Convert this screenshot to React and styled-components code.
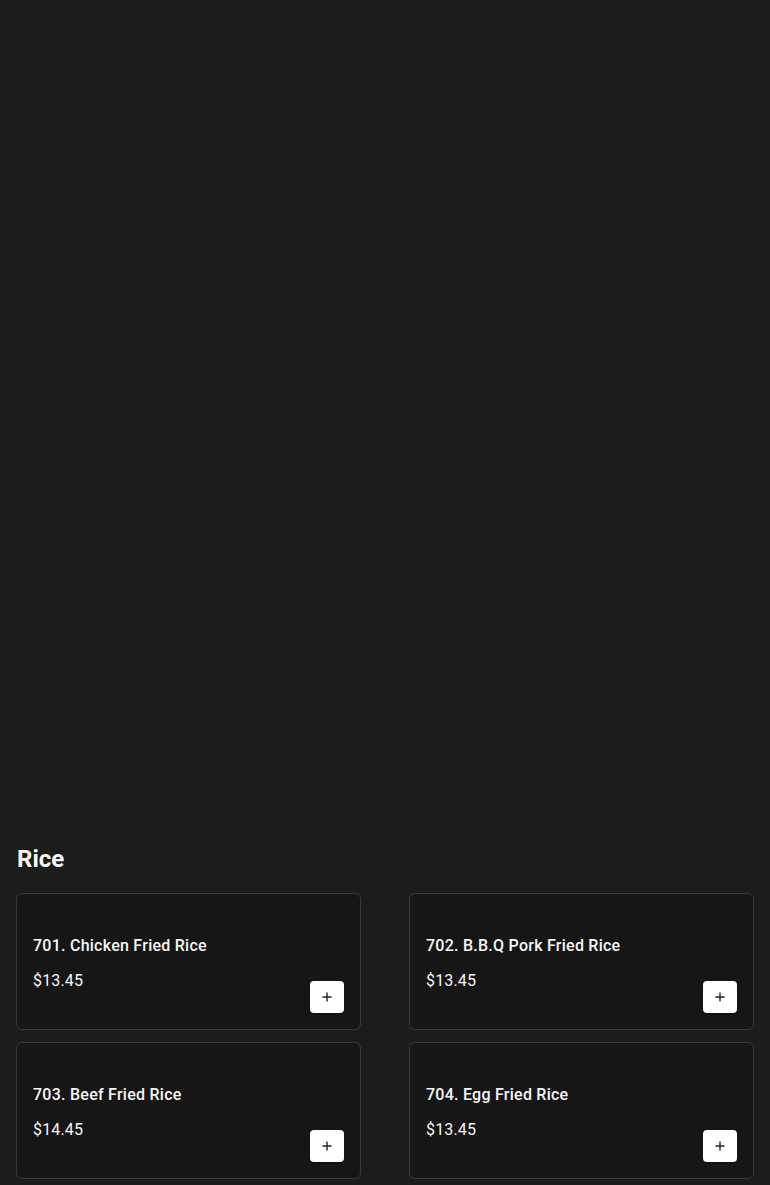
import React from 'react';
import styled, { createGlobalStyle } from 'styled-components';

const GlobalStyle = createGlobalStyle`
  * { box-sizing: border-box; }
  body {
    margin: 0;
    background: #1c1c1c;
    font-family: Roboto, "Liberation Sans", sans-serif;
    color: #f7f7f7;
  }
`;

const Page = styled.main`
  min-height: 100vh;
  padding: 0 16px;
`;

const Hero = styled.div`
  height: 843px;
`;

const SectionTitle = styled.h2`
  margin: 0 0 18px;
  font-size: 24px;
  line-height: 32px;
  font-weight: 700;
  padding-left: 1px;
`;

const Grid = styled.div`
  display: grid;
  grid-template-columns: 1fr 1fr;
  gap: 12px 48px;
`;

const Card = styled.div`
  display: flex;
  height: 137px;
  padding: 16px;
  background: #161616;
  border: 1px solid #3a3a3a;
  border-radius: 6px;
`;

const Info = styled.div`
  flex: 1;
  padding-top: 24px;
`;

const Name = styled.div`
  font-size: 16px;
  line-height: 24px;
  font-weight: 500;
  letter-spacing: 0.25px;
`;

const Price = styled.div`
  margin-top: 11px;
  font-size: 16px;
  line-height: 24px;
  font-weight: 400;
  letter-spacing: 0.15px;
`;

const AddButton = styled.button`
  align-self: flex-end;
  width: 34px;
  height: 32px;
  padding: 0;
  display: flex;
  align-items: center;
  justify-content: center;
  background: #ffffff;
  border: none;
  border-radius: 4px;
  box-shadow: 0 1px 2px rgba(0, 0, 0, 0.4);
  cursor: pointer;
`;

const items = [
  { name: '701. Chicken Fried Rice', price: '$13.45' },
  { name: '702. B.B.Q Pork Fried Rice', price: '$13.45' },
  { name: '703. Beef Fried Rice', price: '$14.45' },
  { name: '704. Egg Fried Rice', price: '$13.45' },
];

const Plus = () => (
  <svg width="10" height="10" viewBox="0 0 10 10">
    <path d="M5 0.5v9M0.5 5h9" stroke="#222" strokeWidth="1.4" />
  </svg>
);

const App = () => {
  return (
    <>
      <GlobalStyle />
      <Page>
        <Hero />
        <SectionTitle>Rice</SectionTitle>
        <Grid>
          {items.map((item) => (
            <Card key={item.name}>
              <Info>
                <Name>{item.name}</Name>
                <Price>{item.price}</Price>
              </Info>
              <AddButton aria-label="Add">
                <Plus />
              </AddButton>
            </Card>
          ))}
        </Grid>
      </Page>
    </>
  );
};

export default App;
